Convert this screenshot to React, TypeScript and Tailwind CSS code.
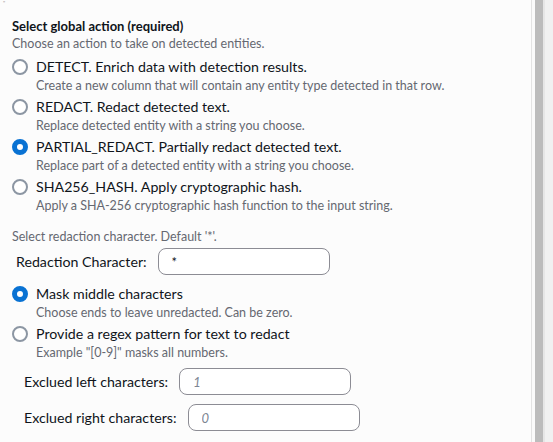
import { useState } from 'react';

type Option = { value: string; label: string; hint: string };

const actions: Option[] = [
  {
    value: 'DETECT',
    label: 'DETECT. Enrich data with detection results.',
    hint: 'Create a new column that will contain any entity type detected in that row.',
  },
  { value: 'REDACT', label: 'REDACT. Redact detected text.', hint: 'Replace detected entity with a string you choose.' },
  {
    value: 'PARTIAL_REDACT',
    label: 'PARTIAL_REDACT. Partially redact detected text.',
    hint: 'Replace part of a detected entity with a string you choose.',
  },
  {
    value: 'SHA256_HASH',
    label: 'SHA256_HASH. Apply cryptographic hash.',
    hint: 'Apply a SHA-256 cryptographic hash function to the input string.',
  },
];

const modes: Option[] = [
  { value: 'mask', label: 'Mask middle characters', hint: 'Choose ends to leave unredacted. Can be zero.' },
  { value: 'regex', label: 'Provide a regex pattern for text to redact', hint: 'Example "[0-9]" masks all numbers.' },
];

function Radio({ checked }: { checked: boolean }) {
  return checked ? (
    <span className="block h-4 w-4 shrink-0 rounded-full border-[5px] border-[#0972d3] bg-white" />
  ) : (
    <span className="block h-4 w-4 shrink-0 rounded-full border-2 border-[#8c96a3] bg-white" />
  );
}

function RadioGroup({ options, value, onChange }: { options: Option[]; value: string; onChange: (v: string) => void }) {
  return (
    <div className="flex flex-col gap-[2px]">
      {options.map((o) => (
        <button key={o.value} onClick={() => onChange(o.value)} className="flex flex-col text-left cursor-pointer">
          <span className="flex h-5 items-center gap-2">
            <Radio checked={value === o.value} />
            <span className="text-[14.2px] text-[#0f141a]">{o.label}</span>
          </span>
          <span className="h-[18px] pl-6 text-[12.5px] leading-[18px] text-[#656871]">{o.hint}</span>
        </button>
      ))}
    </div>
  );
}

function Field({ label, value, placeholder, indent }: { label: string; value?: string; placeholder?: string; indent: string }) {
  return (
    <div className={`flex items-center gap-[11px] ${indent}`}>
      <span className="text-[14.2px] text-[#0f141a]">{label}</span>
      <input
        defaultValue={value}
        placeholder={placeholder}
        className="h-[27px] w-[172px] rounded-lg border border-[#8c8c94] bg-white px-[13px] text-[13px] text-[#0f141a] outline-none placeholder:italic placeholder:text-[#7d8592]"
      />
    </div>
  );
}

export default function App() {
  const [action, setAction] = useState('PARTIAL_REDACT');
  const [mode, setMode] = useState('mask');

  return (
    <div className="flex h-[442px] w-[553px] overflow-hidden bg-[#fcfcfc] font-['Lato','Liberation_Sans',sans-serif]">
      <div className="relative flex-1 border-r border-[#e3e3e3] pl-3 pt-[18px]">
        <span className="absolute left-[3px] top-0 text-[6px] leading-[6px] text-[#9a9a9a]">"</span>

        <h3 className="text-[13px] font-bold leading-[17px] text-[#0f141a]">Select global action (required)</h3>
        <p className="text-[12.5px] leading-[18px] text-[#656871]">Choose an action to take on detected entities.</p>

        <div className="mt-1">
          <RadioGroup options={actions} value={action} onChange={setAction} />
        </div>

        <p className="mt-[13px] text-[12.5px] leading-[18px] text-[#656871]">Select redaction character. Default '*'.</p>
        <div className="mt-[2px]">
          <Field label="Redaction Character:" value="*" indent="pl-1" />
        </div>

        <div className="mt-[9px]">
          <RadioGroup options={modes} value={mode} onChange={setMode} />
        </div>

        <div className="mt-[6px] flex flex-col gap-[9px]">
          <Field label="Exclued left characters:" placeholder="1" indent="pl-3" />
          <Field label="Exclued right characters:" placeholder="0" indent="pl-3" />
        </div>
      </div>

      {/* scrollbar gutter */}
      <div className="flex w-[21px]">
        <div className="w-[3px] bg-[#fafafa]" />
        <div className="w-[8px] bg-[#bcbcbc]" />
        <div className="w-[2px] bg-[#e6e6e6]" />
        <div className="flex-1 bg-[#f1f1f1]" />
      </div>
    </div>
  );
}
